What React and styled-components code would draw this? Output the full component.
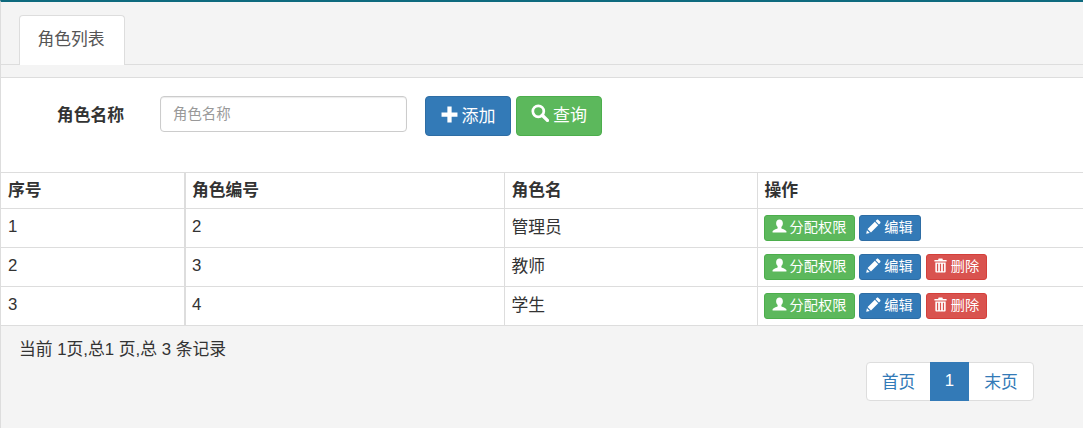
import styled, { createGlobalStyle } from 'styled-components';

const GlobalStyle = createGlobalStyle`
  html, body {
    margin: 0;
    padding: 0;
    background: #f4f4f4;
  }
  body {
    font-family: 'Liberation Sans', 'Noto Sans CJK SC', sans-serif;
    font-size: 16.8px;
    color: #333;
  }
  * {
    box-sizing: border-box;
  }
`;

const PlusIcon = ({ size }) => (
  <svg width={size} height={size} viewBox="0 0 16 16">
    <path fill="currentColor" d="M6 0.5h4v5.500h5.500v4H10v5.500H6V10H0.500V6H6z" />
  </svg>
);

const SearchIcon = ({ size }) => (
  <svg width={size} height={size} viewBox="0 0 16 16">
    <circle cx="6.500" cy="6.500" r="4.900" fill="none" stroke="currentColor" strokeWidth="2.400" />
    <path d="M10 10l4.600 4.600" fill="none" stroke="currentColor" strokeWidth="3" strokeLinecap="round" />
  </svg>
);

const UserIcon = ({ size }) => (
  <svg width={size} height={size} viewBox="0 0 16 16">
    <path
      fill="currentColor"
      d="M8 0.500c2.200 0 3.600 1.700 3.600 4 0 1.700-.7 3.100-1.600 4v1.300c0 .7 4.600 1.400 5.400 3.200v1.500H.6V13c.8-1.800 5.400-2.500 5.400-3.200V8.500c-.9-.9-1.600-2.300-1.600-4 0-2.300 1.400-4 3.600-4z"
    />
  </svg>
);

const PencilIcon = ({ size }) => (
  <svg width={size} height={size} viewBox="0 0 16 16">
    <path
      fill="currentColor"
      d="M11.600 0.800c.4-.4 1-.4 1.400 0l2.200 2.200c.4.4.4 1 0 1.400l-1.400 1.400-3.600-3.600zM9.400 3l3.600 3.600-7.700 7.700-3.600-3.600zM1 12l3 3-3.800.8z"
    />
  </svg>
);

const TrashIcon = ({ size }) => (
  <svg width={size} height={size} viewBox="0 0 16 16">
    <path
      fill="currentColor"
      d="M6 0.500h4l.6 1.500h3.900v1.700h-13V2h3.900zM2.500 4.700h11v9.800c0 .6-.4 1-1 1h-9c-.6 0-1-.4-1-1zM4.200 6.200v7.800h1.300V6.200zM7.350 6.200v7.800h1.300V6.200zM10.500 6.200v7.800h1.300V6.200z"
    />
  </svg>
);

const Page = styled.div`
  height: 428px;
  border-top: 2px solid #0e6a7e;
  border-left: 1px solid #ddd;
  overflow: hidden;
`;

const TabBar = styled.div`
  display: flex;
  height: 63px;
  margin-bottom: 12px;
  padding: 13px 0 0 18px;
  border-bottom: 1px solid #ddd;
`;

const Tab = styled.div`
  width: 106px;
  height: 50px;
  padding-right: 2px;
  line-height: 48px;
  text-align: center;
  color: #555;
  background: #fff;
  border: 1px solid #ddd;
  border-bottom: none;
  border-radius: 4px 4px 0 0;
`;

const SearchPanel = styled.div`
  display: flex;
  align-items: flex-start;
  height: 95px;
  padding-top: 18px;
  background: #fff;
  border-top: 1px solid #ddd;
`;

const FieldLabel = styled.label`
  width: 159px;
  padding: 9px 36px 0 0;
  line-height: 22px;
  font-weight: bold;
  text-align: right;
`;

const SearchInput = styled.input`
  width: 247px;
  height: 36px;
  margin-right: 18px;
  padding: 0 12px;
  font: inherit;
  font-size: 14.4px;
  background: #fff;
  border: 1px solid #ccc;
  border-radius: 4px;
  box-shadow: inset 0 1px 1px rgb(0 0 0 / 8%);

  &::placeholder {
    color: #999;
  }
`;

const ActionButton = styled.button`
  display: inline-flex;
  align-items: center;
  justify-content: center;
  gap: 4px;
  width: 86px;
  height: 40px;
  margin-right: 5px;
  padding: 0 0 ${(p) => (p.$tone === 'green' ? 6 : 4)}px;
  font: inherit;
  font-size: 17px;
  color: #fff;
  background: ${(p) => (p.$tone === 'green' ? '#5cb85c' : '#337ab7')};
  border: 1px solid ${(p) => (p.$tone === 'green' ? '#4cae4c' : '#2e6da4')};
  border-radius: 4px;
`;

const Table = styled.table`
  width: 1082px;
  table-layout: fixed;
  border-collapse: collapse;
  background: #fff;
`;

const HeadCell = styled.th`
  height: 36px;
  padding: 0 7px 4px ${(p) => (p.$thick ? 6 : 7)}px;
  font-weight: bold;
  text-align: left;
  border: 1px solid #ddd;
  border-left: ${(p) => (p.$thick ? '2px solid #ddd' : '1px solid #ddd')};
  &:first-child {
    border-left: none;
  }
`;

const Cell = styled.td`
  height: 39px;
  padding: 0 7px ${(p) => p.$lift || 0}px ${(p) => (p.$thick || p.$actions ? 6 : 7)}px;
  border: 1px solid #ddd;
  border-left: ${(p) => (p.$thick ? '2px solid #ddd' : '1px solid #ddd')};
  &:first-child {
    border-left: none;
  }
`;

const CellActions = styled.div`
  display: flex;
  gap: 4px;
  margin-top: -1px;
`;

const tones = {
  green: ['#5cb85c', '#4cae4c'],
  blue: ['#337ab7', '#2e6da4'],
  red: ['#d9534f', '#d43f3a'],
};

const SmallButton = styled.button`
  display: inline-flex;
  align-items: center;
  justify-content: center;
  gap: 3px;
  width: ${(p) => p.$width}px;
  height: 26px;
  margin-left: ${(p) => (p.$tone === 'red' ? 1 : 0)}px;
  padding: 0 0 3px;
  font: inherit;
  font-size: 14.2px;
  color: #fff;
  background: ${(p) => tones[p.$tone][0]};
  border: 1px solid ${(p) => tones[p.$tone][1]};
  border-radius: 3px;
`;

const Footer = styled.div`
  padding: 14px 0 0 18px;
  line-height: 20px;
`;

const Pager = styled.div`
  display: flex;
  width: 168px;
  height: 39px;
  margin: 2px 0 0 865px;
  color: #337ab7;
  background: #fff;
  border: 1px solid #ddd;
  border-radius: 4px;
`;

const PageLink = styled.a`
  display: flex;
  align-items: center;
  justify-content: center;
  width: ${(p) => p.$width}px;
  margin: -1px 0;
  padding-bottom: 2px;
  color: ${(p) => (p.$active ? '#fff' : '#337ab7')};
  background: ${(p) => (p.$active ? '#337ab7' : 'transparent')};
`;

const roles = [
  { id: 1, code: 2, name: '管理员', canDelete: false },
  { id: 2, code: 3, name: '教师', canDelete: true },
  { id: 3, code: 4, name: '学生', canDelete: true },
];

const App = () => {
  return (
    <>
      <GlobalStyle />
      <Page>
        <TabBar>
          <Tab>角色列表</Tab>
        </TabBar>
        <SearchPanel>
          <FieldLabel>角色名称</FieldLabel>
          <SearchInput placeholder="角色名称" />
          <ActionButton>
            <PlusIcon size={17} />
            添加
          </ActionButton>
          <ActionButton $tone="green">
            <SearchIcon size={18} />
            查询
          </ActionButton>
        </SearchPanel>
        <Table>
          <colgroup>
            <col width="184" />
            <col width="319" />
            <col width="253" />
            <col width="326" />
          </colgroup>
          <thead>
            <tr>
              <HeadCell>序号</HeadCell>
              <HeadCell $thick>角色编号</HeadCell>
              <HeadCell>角色名</HeadCell>
              <HeadCell>操作</HeadCell>
            </tr>
          </thead>
          <tbody>
            {roles.map((role) => (
              <tr key={role.id}>
                <Cell $lift={2}>{role.id}</Cell>
                <Cell $thick $lift={2}>
                  {role.code}
                </Cell>
                <Cell $lift={5}>{role.name}</Cell>
                <Cell $actions>
                  <CellActions>
                    <SmallButton $tone="green" $width={91}>
                      <UserIcon size={15} />
                      分配权限
                    </SmallButton>
                    <SmallButton $tone="blue" $width={62}>
                      <PencilIcon size={15} />
                      编辑
                    </SmallButton>
                    {role.canDelete && (
                      <SmallButton $tone="red" $width={61}>
                        <TrashIcon size={15} />
                        删除
                      </SmallButton>
                    )}
                  </CellActions>
                </Cell>
              </tr>
            ))}
          </tbody>
        </Table>
        <Footer>当前 1页,总1 页,总 3 条记录</Footer>
        <Pager>
          <PageLink $width={63}>首页</PageLink>
          <PageLink $width={39} $active>
            1
          </PageLink>
          <PageLink $width={64}>末页</PageLink>
        </Pager>
      </Page>
    </>
  );
};

export default App;
